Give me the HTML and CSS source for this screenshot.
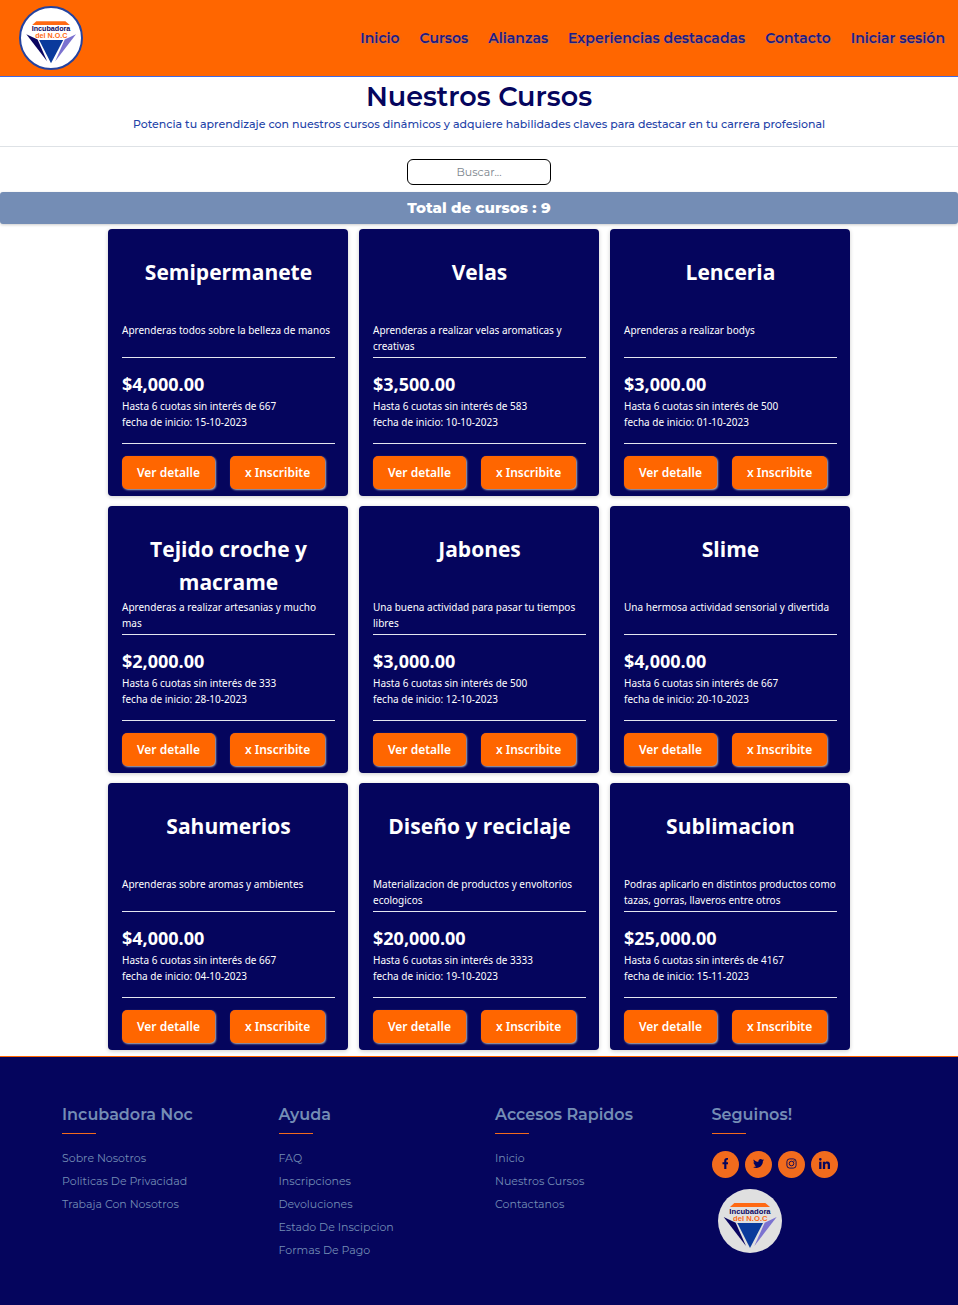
FILE: index.html
```html
<!DOCTYPE html>
<html lang="es">
<head>
<meta charset="utf-8">
<meta name="viewport" content="width=device-width, initial-scale=1">
<title>Nuestros Cursos - Incubadora Noc</title>
<link rel="stylesheet" href="styles.css">
</head>
<body>
<header class="topbar">
  <a class="brand" href="#" aria-label="Incubadora del N.O.C">
    <svg class="logo" viewBox="0 0 192 192">
      <path fill="#ff6a13" d="M49 42h93l14 12H36z"/>
      <text class="logo-name" x="96" y="74" text-anchor="middle">Incubadora</text>
      <text class="logo-sub" x="97" y="97" text-anchor="middle">del N.O.C</text>
      <path fill="#0a0560" d="M17 84l36 17 31 70z"/>
      <path fill="#0a3a9c" d="M58 102h77l-39 75z"/>
      <path fill="#7b72d0" d="M176 84l-36 17-31 70z"/>
    </svg>
  </a>
  <nav class="menu">
    <a href="#">Inicio</a>
    <a href="#">Cursos</a>
    <a href="#">Alianzas</a>
    <a href="#">Experiencias destacadas</a>
    <a href="#">Contacto</a>
    <a href="#">Iniciar sesión</a>
  </nav>
</header>

<main>
  <section class="intro">
    <h1>Nuestros Cursos</h1>
    <p>Potencia tu aprendizaje con nuestros cursos dinámicos y adquiere habilidades claves para destacar en tu carrera profesional</p>
  </section>
  <form class="search"><input type="text" placeholder="Buscar..." aria-label="Buscar cursos"></form>
  <h2 class="total">Total de cursos : 9</h2>

  <section class="courses">
    <article class="card">
      <h3>Semipermanete</h3>
      <p class="about">Aprenderas todos sobre la belleza de manos</p>
      <div class="cost"><strong>$4,000.00</strong><p>Hasta 6 cuotas sin interés de 667</p><p>fecha de inicio: 15-10-2023</p></div>
      <div class="actions"><button type="button">Ver detalle</button><button type="button">x Inscribite</button></div>
    </article>
    <article class="card">
      <h3>Velas</h3>
      <p class="about">Aprenderas a realizar velas aromaticas y creativas</p>
      <div class="cost"><strong>$3,500.00</strong><p>Hasta 6 cuotas sin interés de 583</p><p>fecha de inicio: 10-10-2023</p></div>
      <div class="actions"><button type="button">Ver detalle</button><button type="button">x Inscribite</button></div>
    </article>
    <article class="card">
      <h3>Lenceria</h3>
      <p class="about">Aprenderas a realizar bodys</p>
      <div class="cost"><strong>$3,000.00</strong><p>Hasta 6 cuotas sin interés de 500</p><p>fecha de inicio: 01-10-2023</p></div>
      <div class="actions"><button type="button">Ver detalle</button><button type="button">x Inscribite</button></div>
    </article>
    <article class="card">
      <h3>Tejido croche y macrame</h3>
      <p class="about">Aprenderas a realizar artesanias y mucho mas</p>
      <div class="cost"><strong>$2,000.00</strong><p>Hasta 6 cuotas sin interés de 333</p><p>fecha de inicio: 28-10-2023</p></div>
      <div class="actions"><button type="button">Ver detalle</button><button type="button">x Inscribite</button></div>
    </article>
    <article class="card">
      <h3>Jabones</h3>
      <p class="about">Una buena actividad para pasar tu tiempos libres</p>
      <div class="cost"><strong>$3,000.00</strong><p>Hasta 6 cuotas sin interés de 500</p><p>fecha de inicio: 12-10-2023</p></div>
      <div class="actions"><button type="button">Ver detalle</button><button type="button">x Inscribite</button></div>
    </article>
    <article class="card">
      <h3>Slime</h3>
      <p class="about">Una hermosa actividad sensorial y divertida</p>
      <div class="cost"><strong>$4,000.00</strong><p>Hasta 6 cuotas sin interés de 667</p><p>fecha de inicio: 20-10-2023</p></div>
      <div class="actions"><button type="button">Ver detalle</button><button type="button">x Inscribite</button></div>
    </article>
    <article class="card">
      <h3>Sahumerios</h3>
      <p class="about">Aprenderas sobre aromas y ambientes</p>
      <div class="cost"><strong>$4,000.00</strong><p>Hasta 6 cuotas sin interés de 667</p><p>fecha de inicio: 04-10-2023</p></div>
      <div class="actions"><button type="button">Ver detalle</button><button type="button">x Inscribite</button></div>
    </article>
    <article class="card">
      <h3>Diseño y reciclaje</h3>
      <p class="about">Materializacion de productos y envoltorios ecologicos</p>
      <div class="cost"><strong>$20,000.00</strong><p>Hasta 6 cuotas sin interés de 3333</p><p>fecha de inicio: 19-10-2023</p></div>
      <div class="actions"><button type="button">Ver detalle</button><button type="button">x Inscribite</button></div>
    </article>
    <article class="card">
      <h3>Sublimacion</h3>
      <p class="about">Podras aplicarlo en distintos productos como tazas, gorras, llaveros entre otros</p>
      <div class="cost"><strong>$25,000.00</strong><p>Hasta 6 cuotas sin interés de 4167</p><p>fecha de inicio: 15-11-2023</p></div>
      <div class="actions"><button type="button">Ver detalle</button><button type="button">x Inscribite</button></div>
    </article>
  </section>
</main>

<footer class="footer">
  <div class="footer-grid">
    <section>
      <h4>Incubadora Noc</h4>
      <ul>
        <li><a href="#">Sobre Nosotros</a></li>
        <li><a href="#">Politicas De Privacidad</a></li>
        <li><a href="#">Trabaja Con Nosotros</a></li>
      </ul>
    </section>
    <section>
      <h4>Ayuda</h4>
      <ul>
        <li><a href="#">FAQ</a></li>
        <li><a href="#">Inscripciones</a></li>
        <li><a href="#">Devoluciones</a></li>
        <li><a href="#">Estado De Inscipcion</a></li>
        <li><a href="#">Formas De Pago</a></li>
      </ul>
    </section>
    <section>
      <h4>Accesos Rapidos</h4>
      <ul>
        <li><a href="#">Inicio</a></li>
        <li><a href="#">Nuestros Cursos</a></li>
        <li><a href="#">Contactanos</a></li>
      </ul>
    </section>
    <section>
      <h4>Seguinos!</h4>
      <div class="social">
        <a href="#" aria-label="Facebook"><svg viewBox="0 0 320 512"><path d="M279 288l14-93h-89v-60c0-25 12-50 52-50h41V7s-37-7-72-7c-73 0-121 44-121 125v70H23v93h81v224h100V288z"/></svg></a>
        <a href="#" aria-label="Twitter"><svg viewBox="0 0 512 512"><path d="M459 152c0 4 0 9 0 14 0 138-106 298-299 298-59 0-114-17-160-47 8 1 16 1 25 1 49 0 94-16 130-45-46-1-85-31-98-73 7 1 13 2 20 2 9 0 19-2 28-4-48-10-84-52-84-103v-2c14 8 30 13 47 14-28-19-46-51-46-88 0-19 5-37 14-53 52 64 130 106 217 110-2-8-3-16-3-24 0-58 47-105 105-105 30 0 58 13 77 33 24-5 46-13 67-25-8 24-25 45-46 58 21-2 42-8 60-16-14 21-32 40-54 55z"/></svg></a>
        <a href="#" aria-label="Instagram"><svg viewBox="0 0 24 24" fill="none" stroke="currentColor" stroke-width="2"><rect x="2" y="2" width="20" height="20" rx="6"/><circle cx="12" cy="12" r="5"/><circle cx="17.500" cy="6.500" r=".5"/></svg></a>
        <a href="#" aria-label="LinkedIn"><svg viewBox="0 0 448 448"><path d="M100 448H7V149h93zM54 108a54 54 0 1 1 0-108 54 54 0 0 1 0 108zm394 340h-93V302c0-35-1-79-48-79-49 0-56 38-56 77v148h-93V149h89v41h1c13-24 43-48 88-48 94 0 112 62 112 142z"/></svg></a>
      </div>
      <a class="footer-brand" href="#" aria-label="Incubadora del N.O.C">
        <svg class="logo" viewBox="0 0 192 192">
          <path fill="#ff6a13" d="M49 42h93l14 12H36z"/>
          <text class="logo-name" x="96" y="74" text-anchor="middle">Incubadora</text>
          <text class="logo-sub" x="97" y="97" text-anchor="middle">del N.O.C</text>
          <path fill="#0a0560" d="M17 84l36 17 31 70z"/>
          <path fill="#0a3a9c" d="M58 102h77l-39 75z"/>
          <path fill="#7b72d0" d="M176 84l-36 17-31 70z"/>
        </svg>
      </a>
    </section>
  </div>
</footer>
</body>
</html>
```
FILE: styles.css
```css
:root {
  --navy: #05055d;
  --orange: #ff6600;
  --steel: #748db5;
  --display: Montserrat, Inter, sans-serif;
  --text: "Segoe UI", "Noto Sans", sans-serif;
  --heading: "Segoe UI", "Open Sans", sans-serif;
}
* { box-sizing: border-box; }
body {
  margin: 0;
  min-height: 100vh;
  display: flex;
  flex-direction: column;
  background: #fff;
  font-family: var(--display);
}
h1, h2, h3, h4, p, ul { margin: 0; padding: 0; }
ul { list-style: none; }
a { color: inherit; text-decoration: none; }

.logo { display: block; width: 100%; height: 100%; }
.logo-name, .logo-sub { font-family: "Liberation Sans", sans-serif; font-weight: 700; font-size: 23px; }
.logo-name { fill: #0a0560; }
.logo-sub { fill: #ff6a13; }

.topbar {
  display: flex;
  align-items: center;
  justify-content: space-between;
  padding: 6px 13px 6px 19px;
  background: var(--orange);
  border-bottom: 1px solid #4169e1;
}
.brand {
  width: 64px;
  height: 64px;
  border: 2px solid #2443a0;
  border-radius: 50%;
  background: #fff;
}
.menu {
  display: flex;
  gap: 20px;
  font-size: 14px;
  font-weight: 600;
  color: #1e1a83;
  text-shadow: 1px 1px 1px rgb(116 141 181 / 50%);
}

.intro {
  padding: 4px 16px 14px;
  text-align: center;
  border-bottom: 1px solid #dee2e6;
}
.intro h1 { font-size: 27px; line-height: 32px; font-weight: 600; color: var(--navy); }
.intro p { margin-top: 3px; font-size: 11px; line-height: 16px; font-weight: 500; color: #2443a8; }

.search { display: flex; justify-content: center; padding: 12px 0 7px; }
.search input {
  width: 144px;
  height: 26px;
  border: 1px solid #000;
  border-radius: 6px;
  background: #fff;
  font: 11px var(--display);
  text-align: center;
}
.search input::placeholder { color: #7c858d; }
.total {
  padding: 4px;
  border-radius: 3px;
  background: var(--steel);
  color: #fff;
  box-shadow: 0 1px 3px rgb(0 0 0 / 20%);
  font-size: 15px;
  line-height: 24px;
  font-weight: 800;
  text-align: center;
}

.courses {
  display: grid;
  grid-template-columns: repeat(auto-fit, 240px);
  justify-content: center;
  gap: 10px 11px;
  max-width: 800px;
  margin: 0 auto;
  padding: 5px 0 6px;
}
.card {
  display: flex;
  flex-direction: column;
  padding: 27px 13px 7px 14px;
  border-radius: 4px;
  background: var(--navy);
  color: #fff;
  box-shadow: 0 1px 4px rgb(0 0 0 / 20%);
  font-family: var(--text);
  font-size: 10px;
  line-height: 16px;
}
.card h3 { min-height: 66px; font-family: var(--heading); font-size: 21px; line-height: 33px; font-weight: 700; text-align: center; }
.about { min-height: 36px; border-bottom: 1px solid #e4e6f0; }
.cost { padding: 14px 0 13px; border-bottom: 1px solid #e4e6f0; }
.cost strong { display: block; margin-bottom: 2px; font-family: var(--heading); font-size: 18px; line-height: 24px; }
.actions { display: flex; gap: 15px; padding-top: 12px; }
.actions button {
  height: 33px;
  padding: 0 15px;
  border: 0;
  border-radius: 5px;
  background: var(--orange);
  color: #fff;
  box-shadow: 1px 1px 2px #b7b7b7;
  font: 600 12px var(--text);
  white-space: nowrap;
}

.footer {
  flex: 1;
  padding: 48px 46px;
  border-top: 1px solid var(--orange);
  background: var(--navy);
  color: var(--steel);
}
.footer-grid { display: grid; grid-template-columns: repeat(4, 1fr); }
.footer section { padding: 0 16px; }
.footer h4 { margin-bottom: 16px; font-size: 16px; line-height: 20px; font-weight: 600; }
.footer h4::after {
  content: "";
  display: block;
  width: 34px;
  height: 1px;
  margin-top: 8px;
  background: #f26b1d;
}
.footer ul { display: grid; gap: 7px; font-size: 11px; line-height: 16px; font-weight: 400; }
.social { display: flex; gap: 6px; padding-top: 1px; }
.social a {
  display: grid;
  place-items: center;
  width: 27px;
  height: 27px;
  padding-bottom: 3px;
  border-radius: 50%;
  background: #f26b1d;
  color: var(--navy);
}
.social svg { display: block; height: 11px; }
.social path { fill: currentColor; }
.footer-brand {
  display: block;
  width: 64px;
  height: 64px;
  margin: 11px 6px 0;
  border-radius: 50%;
  background: #e0e0e0;
}
```
